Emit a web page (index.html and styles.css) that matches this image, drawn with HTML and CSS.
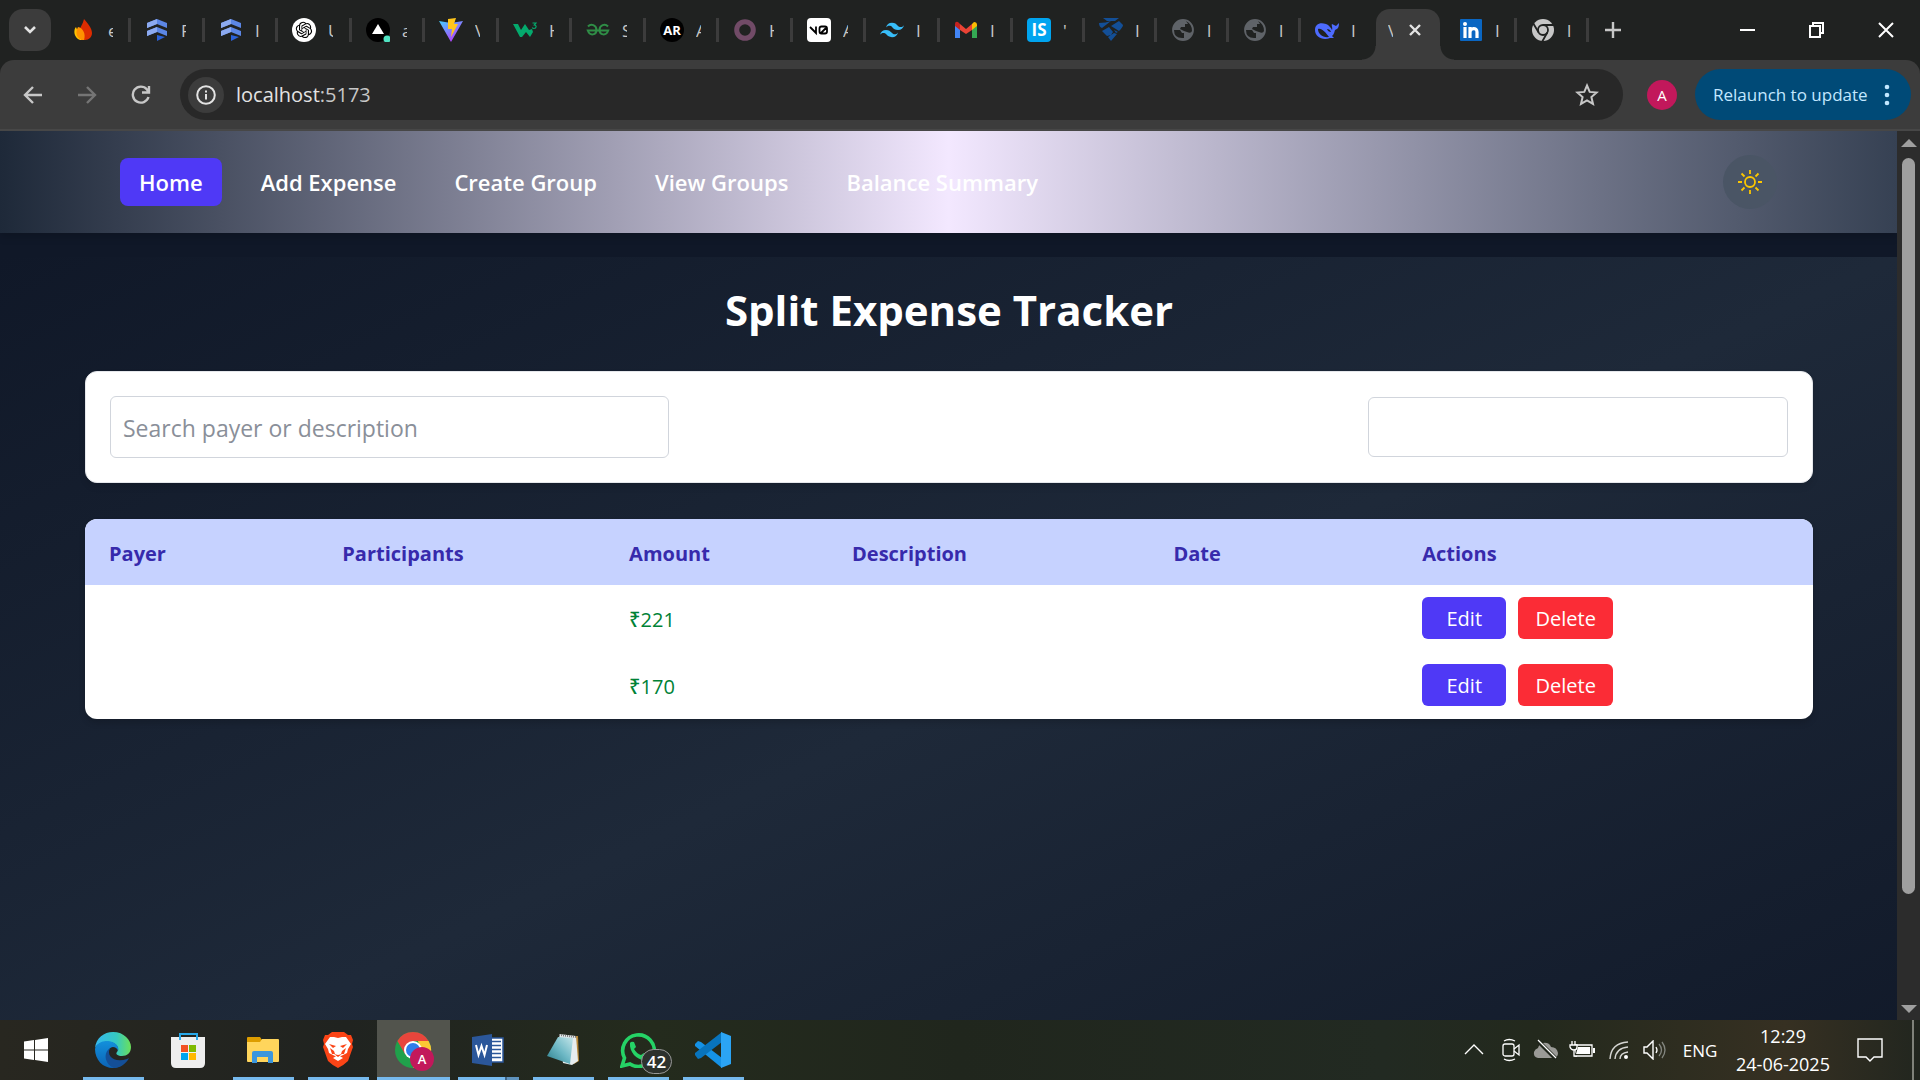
FILE: index.html
```html
<!DOCTYPE html>
<html lang="en">
<head>
<meta charset="utf-8">
<title>Split Expense Tracker</title>
<link rel="stylesheet" href="styles.css">
</head>
<body>
<header class="browser">
  <div class="tabstrip">
    <button class="tab-search" aria-label="Search tabs"><svg width="14" height="8" viewBox="0 0 14 8"><path d="M2 1l5 5 5-5" fill="none" stroke="#e3e3e3" stroke-width="2.6"/></svg></button>
    <div class="tabs">
      <button class="tab"><svg class="fav" viewBox="0 0 24 24"><path d="M4 9C1 12 2 20 8 22h6C7 19 6 14 4 9z" fill="#ffc400"/><path d="M12 1c4 5 8 9 8 14 0 4-3 7-7 7-5 0-8-3-6-9 1-4 4-7 5-12z" fill="#dd2c00"/><path d="M6 9c5 1 8 7 6 13-6 0-10-6-6-13z" fill="#ff9100"/></svg><span class="name">e</span></button>
      <button class="tab"><svg class="fav" viewBox="0 0 24 24"><path d="M2 5l10-4 10 4v5L12 6 2 10zM2 13l10-4 10 4v5l-10-4-10 4z" fill="#5c87e6"/><path d="M2 5l10-4v5L2 10zM2 13l10-4v5L2 18z" fill="#8caaf0"/><path d="M12 17l8 2-8 4z" fill="#2b62d9"/></svg><span class="name">F</span></button>
      <button class="tab"><svg class="fav" viewBox="0 0 24 24"><path d="M2 5l10-4 10 4v5L12 6 2 10zM2 13l10-4 10 4v5l-10-4-10 4z" fill="#5c87e6"/><path d="M2 5l10-4v5L2 10zM2 13l10-4v5L2 18z" fill="#8caaf0"/><path d="M12 17l8 2-8 4z" fill="#2b62d9"/></svg><span class="name">I</span></button>
      <button class="tab"><svg class="fav" viewBox="0 0 24 24"><circle cx="12" cy="12" r="12" fill="#fff"/><path transform="translate(3.800 3.800) scale(.68)" fill="#000" d="M22.2819 9.8211a5.9847 5.9847 0 0 0-.5157-4.9108 6.0462 6.0462 0 0 0-6.5098-2.9A6.0651 6.0651 0 0 0 4.9807 4.1818a5.9847 5.9847 0 0 0-3.9977 2.9 6.0462 6.0462 0 0 0 .7427 7.0966 5.98 5.98 0 0 0 .511 4.9107 6.051 6.051 0 0 0 6.5146 2.9001A5.9847 5.9847 0 0 0 13.2599 24a6.0557 6.0557 0 0 0 5.7718-4.2058 5.9894 5.9894 0 0 0 3.9977-2.9001 6.0557 6.0557 0 0 0-.7475-7.0729zm-9.022 12.6081a4.4755 4.4755 0 0 1-2.8764-1.0408l.1419-.0804 4.7783-2.7582a.7948.7948 0 0 0 .3927-.6813v-6.7369l2.02 1.1686a.071.071 0 0 1 .038.052v5.5826a4.504 4.504 0 0 1-4.4945 4.4944zm-9.6607-4.1254a4.4708 4.4708 0 0 1-.5346-3.0137l.142.0852 4.783 2.7582a.7712.7712 0 0 0 .7806 0l5.8428-3.3685v2.3324a.0804.0804 0 0 1-.0332.0615L9.74 19.9502a4.4992 4.4992 0 0 1-6.1408-1.6464zM2.3408 7.8956a4.485 4.485 0 0 1 2.3655-1.9728V11.6a.7664.7664 0 0 0 .3879.6765l5.8144 3.3543-2.0201 1.1685a.0757.0757 0 0 1-.071 0l-4.8303-2.7865A4.504 4.504 0 0 1 2.3408 7.872zm16.5963 3.8558L13.1038 8.364 15.1192 7.2a.0757.0757 0 0 1 .071 0l4.8303 2.7913a4.4944 4.4944 0 0 1-.6765 8.1042v-5.6772a.79.79 0 0 0-.407-.667zm2.0107-3.0231l-.142-.0852-4.7735-2.7818a.7759.7759 0 0 0-.7854 0L9.409 9.2297V6.8974a.0662.0662 0 0 1 .0284-.0615l4.8303-2.7866a4.4992 4.4992 0 0 1 6.6802 4.66zM8.3065 12.863l-2.02-1.1638a.0804.0804 0 0 1-.038-.0567V6.0742a4.4992 4.4992 0 0 1 7.3757-3.4537l-.142.0805L8.704 5.459a.7948.7948 0 0 0-.3927.6813zm1.0976-2.3654l2.602-1.4998 2.6069 1.4998v2.9994l-2.5974 1.4997-2.6067-1.4997Z"/></svg><span class="name">U</span></button>
      <button class="tab"><svg class="fav" viewBox="0 0 24 24"><circle cx="12" cy="12" r="12" fill="#000"/><path d="M12 6l6 10H6z" fill="#fff"/><circle cx="21" cy="21" r="3.500" fill="#50e3c2"/></svg><span class="name">a</span></button>
      <button class="tab"><svg class="fav" viewBox="0 0 24 24"><defs><linearGradient id="vite" x1="0" y1="0" x2=".7" y2="1"><stop offset="0" stop-color="#41d1ff"/><stop offset="1" stop-color="#bd34fe"/></linearGradient></defs><path d="M0 3l12 21L24 3l-12 2z" fill="url(#vite)"/><path d="M9 1l8-1-2 6h4l-7 13 1-8H9z" fill="#ffc61c"/></svg><span class="name">V</span></button>
      <button class="tab"><svg class="fav" viewBox="0 0 24 24"><path d="M0 6h5l3 6 4-6 4 6 3-1 1 3-3 5-4-5-4 5H7z" fill="#04aa6d"/><path d="M19.500 5h3.500l-1.700 2c2.600.1 2.300 3.500-.3 3.500-1 0-1.500-.4-1.700-1" fill="none" stroke="#04aa6d" stroke-width="1.200"/></svg><span class="name">H</span></button>
      <button class="tab"><svg class="fav" viewBox="0 0 24 24"><g fill="none" stroke="#2f8d46" stroke-width="2"><path d="M2 8.500C5 5 10.500 7 10.500 12S4 18.500 1.800 12.500H22.200C20 18.500 13.500 17 13.500 12S19 5 22 8.500"/></g></svg><span class="name">S</span></button>
      <button class="tab"><span class="fav fav-ar">AR</span><span class="name">A</span></button>
      <button class="tab"><svg class="fav" viewBox="0 0 24 24"><circle cx="12" cy="12" r="8.300" fill="none" stroke="#714b67" stroke-width="5"/></svg><span class="name">H</span></button>
      <button class="tab"><svg class="fav" viewBox="0 0 24 24"><rect width="24" height="24" rx="4" fill="#fff"/><path d="M3 9l6 6V8.500M12.500 13.500v-3q0-2 2-2h3.500q2 0 2 2v3q0 2-2 2h-3.500q-2 0-2-2zM14 15l6-6" fill="none" stroke="#000" stroke-width="1.800"/></svg><span class="name">A</span></button>
      <button class="tab"><svg class="fav" viewBox="0 0 24 24"><path d="M12 4.800c-3.200 0-5.200 1.600-6 4.800 1.200-1.600 2.600-2.200 4.200-1.800.9.230 1.570.890 2.290 1.620C13.670 10.620 15.030 12 18 12c3.200 0 5.200-1.600 6-4.800-1.200 1.600-2.600 2.200-4.200 1.800-.91-.23-1.570-.89-2.290-1.620C16.340 6.180 14.980 4.800 12 4.800M6 12c-3.200 0-5.200 1.600-6 4.800 1.200-1.600 2.600-2.200 4.200-1.800.91.230 1.570.890 2.290 1.620C7.670 17.820 9.030 19.200 12 19.200c3.200 0 5.200-1.600 6-4.800-1.200 1.600-2.600 2.200-4.200 1.800-.91-.23-1.570-.89-2.290-1.620C10.340 13.380 8.980 12 6 12" fill="#38bdf8"/></svg><span class="name">I</span></button>
      <button class="tab"><svg class="fav" viewBox="0 0 24 24"><path d="M1 7l5 4v9H1z" fill="#4285f4"/><path d="M18 11l5-4v13h-5z" fill="#34a853"/><path d="M18 6l2-2q3 0 3 3v1l-5 4z" fill="#fbbc04"/><path d="M1 8V6q0-3 3-2l2 2v6z" fill="#c5221f"/><path d="M6 6l6 5 6-5v6l-6 4-6-4z" fill="#ea4335"/></svg><span class="name">I</span></button>
      <button class="tab"><span class="fav fav-is">IS</span><span class="name">'</span></button>
      <button class="tab"><svg class="fav" viewBox="0 0 24 24"><path d="M4 0h16l-4 3H8zM0 5q7 0 12-2L3 10q-3-1-3-5zM12 8l8-5 4 4q0 2-4 6zM3 13l7-4 4 5-2 3-4 1zM9 19l6-4 3 1-6 7zM15 12l4 2-2 1z" fill="#134f97"/></svg><span class="name">I</span></button>
      <button class="tab"><svg class="fav" viewBox="0 0 24 24"><circle cx="12" cy="12" r="9.700" fill="#5f6368" stroke="#5f6368" stroke-width="2.400"/><path d="M3 12h6l2 3h2v5q-10 1-10-8zM15 3q6 3 6 10-1 3-5 1l-3-1-4-2 1-2h4V6h3z" fill="#202221"/></svg><span class="name">l</span></button>
      <button class="tab"><svg class="fav" viewBox="0 0 24 24"><circle cx="12" cy="12" r="9.700" fill="#5f6368" stroke="#5f6368" stroke-width="2.400"/><path d="M3 12h6l2 3h2v5q-10 1-10-8zM15 3q6 3 6 10-1 3-5 1l-3-1-4-2 1-2h4V6h3z" fill="#202221"/></svg><span class="name">l</span></button>
      <button class="tab tab-last"><svg class="fav" viewBox="0 0 24 24"><path d="M0 12c0-6 5-8 11-6 3 1 5 4 6 6 1-2-1-5 0-6l4 2 3-3c0 4-1 6-4 7-1 4-2 5-3 6l2 2h-4c-7 3-15-1-15-8z" fill="#4d6bfe"/><path d="M3 11c4-1 7 3 11 8-6 1-11-3-11-8zM12 11q3 0 4 3-3 0-4-3z" fill="#202221"/></svg><span class="name">I</span></button>
      <button class="tab-active"><span class="name">V</span><svg width="14" height="14" viewBox="0 0 14 14"><path d="M2 2l10 10M12 2L2 12" stroke="#e3e3e3" stroke-width="2.400"/></svg></button>
      <button class="tab"><svg class="fav" viewBox="0 0 24 24"><rect x="1" y="1" width="22" height="22" rx="1" fill="#0a66c2"/><g stroke="#fff" stroke-width="3.200" fill="none"><path d="M6 9v11M11 9v11M11 14c0-4 7-5 7 0v6"/></g><circle cx="6" cy="6" r="2" fill="#fff"/></svg><span class="name">I</span></button>
      <button class="tab"><svg class="fav" viewBox="0 0 24 24"><circle cx="12" cy="12" r="11" fill="#c7c7c7"/><g fill="none" stroke="#202221" stroke-width="1.800"><circle cx="12" cy="12" r="5"/><path d="M12 7h11M7.700 14.500L2 5M16.300 14.500L11 24"/></g></svg><span class="name">l</span></button>
      <button class="icon-btn new-tab" aria-label="New tab"><svg width="16" height="16" viewBox="0 0 16 16"><path d="M8 0v16M0 8h16" stroke="#c7c7c7" stroke-width="2.400"/></svg></button>
    </div>
    <div class="window-controls">
      <button class="icon-btn" aria-label="Minimize"><svg width="16" height="16" viewBox="0 0 16 16"><path d="M0 8h15" stroke="#fff" stroke-width="2"/></svg></button>
      <button class="icon-btn" aria-label="Restore"><svg width="16" height="16" viewBox="0 0 16 16"><path d="M1 4h10v11H1zM4 4V1h10v10h-3" fill="none" stroke="#fff" stroke-width="2"/></svg></button>
      <button class="icon-btn" aria-label="Close"><svg width="16" height="16" viewBox="0 0 16 16"><path d="M1 1l14 14M15 1L1 15" stroke="#fff" stroke-width="2"/></svg></button>
    </div>
  </div>
  <div class="toolbar">
    <div class="history">
      <button class="icon-btn" aria-label="Back"><svg width="20" height="20" viewBox="0 0 20 20"><path d="M19 10H2M10 2l-8 8 8 8" fill="none" stroke="#c7c7c7" stroke-width="2.400"/></svg></button>
      <button class="icon-btn" aria-label="Forward"><svg width="20" height="20" viewBox="0 0 20 20"><path d="M1 10h17M10 2l8 8-8 8" fill="none" stroke="#757575" stroke-width="2.400"/></svg></button>
      <button class="icon-btn" aria-label="Reload"><svg width="20" height="20" viewBox="0 0 20 20"><path d="M17.500 12A8 8 0 1 1 16 4.500l1 1.500M18 1v6.500h-7" fill="none" stroke="#c7c7c7" stroke-width="2.400"/></svg></button>
    </div>
    <div class="omnibox">
      <button class="site-info" aria-label="Site information"><svg width="20" height="20" viewBox="0 0 20 20"><circle cx="10" cy="10" r="8.800" fill="none" stroke="#e3e3e3" stroke-width="2"/><path d="M10 9v5.500M10 5.500v2" stroke="#e3e3e3" stroke-width="2"/></svg></button>
      <div class="url">localhost<span class="port">:5173</span></div>
      <button class="icon-btn" aria-label="Bookmark this tab"><svg width="24" height="24" viewBox="0 0 24 24"><path d="M12 2.500l2.700 6.400 7 .6-5.300 4.600 1.600 6.800-6-3.600-6 3.600 1.600-6.800L2.300 9.500l7-.6z" fill="none" stroke="#c7c7c7" stroke-width="2"/></svg></button>
    </div>
    <button class="avatar">A</button>
    <button class="relaunch">Relaunch to update<svg width="6" height="24" viewBox="0 0 6 24"><g fill="#c2e7ff"><circle cx="3" cy="4" r="2.300"/><circle cx="3" cy="12" r="2.300"/><circle cx="3" cy="20" r="2.300"/></g></svg></button>
  </div>
</header>

<div class="viewport">
  <div class="page">
    <nav class="navbar">
      <div class="nav-links">
        <a class="nav-link nav-link-current" href="#home">Home</a>
        <a class="nav-link" href="#add">Add Expense</a>
        <a class="nav-link" href="#create">Create Group</a>
        <a class="nav-link" href="#groups">View Groups</a>
        <a class="nav-link" href="#balance">Balance Summary</a>
      </div>
      <button class="theme-toggle" aria-label="Toggle theme"><svg width="24" height="24" viewBox="0 0 24 24"><g fill="none" stroke="#fdc700" stroke-width="1.800"><circle cx="12" cy="12" r="5"/><path d="M12 0v4M12 20v4M0 12h4M20 12h4M3.500 3.500l3 3M17.500 17.500l3 3M3.500 20.500l3-3M17.500 6.500l3-3"/></g></svg></button>
    </nav>
    <main class="content">
      <h1 class="title">Split Expense Tracker</h1>
      <section class="filters">
        <input class="search" type="text" placeholder="Search payer or description" aria-label="Search payer or description">
        <select class="picker" aria-label="Filter"><option></option></select>
      </section>
      <table class="expenses">
        <colgroup><col class="c-payer"><col class="c-people"><col class="c-amount"><col class="c-text"><col class="c-date"><col class="c-actions"></colgroup>
        <thead>
          <tr><th>Payer</th><th>Participants</th><th>Amount</th><th>Description</th><th>Date</th><th>Actions</th></tr>
        </thead>
        <tbody>
          <tr><td></td><td></td><td class="amount">₹221</td><td></td><td></td><td><div class="actions"><button class="btn btn-edit">Edit</button><button class="btn btn-delete">Delete</button></div></td></tr>
          <tr><td></td><td></td><td class="amount">₹170</td><td></td><td></td><td><div class="actions"><button class="btn btn-edit">Edit</button><button class="btn btn-delete">Delete</button></div></td></tr>
        </tbody>
      </table>
    </main>
  </div>
  <div class="scrollbar">
    <svg width="16" height="8" viewBox="0 0 16 8"><path d="M0 8l8-8 8 8z" fill="#9f9f9f"/></svg>
    <div class="track"><div class="thumb"></div></div>
    <svg width="16" height="8" viewBox="0 0 16 8"><path d="M0 0l8 8 8-8z" fill="#9f9f9f"/></svg>
  </div>
</div>

<footer class="taskbar">
  <button class="start" aria-label="Start"><svg width="24" height="24" viewBox="0 0 24 24"><path d="M0 3.500L10 2v9.500H0zM11 1.900L24 0v11.500H11zM0 12.500h10V22L0 20.500zM11 12.500h13V24l-13-1.900z" fill="#fff"/></svg></button>
  <div class="apps">
    <button class="app running" aria-label="Edge"><svg width="36" height="36" viewBox="0 0 36 36"><defs><linearGradient id="e1"><stop offset="0" stop-color="#35b8f0"/><stop offset=".6" stop-color="#36c9c0"/><stop offset="1" stop-color="#6be05a"/></linearGradient><linearGradient id="e2" x1="0" y1="0" x2="0" y2="1"><stop offset="0" stop-color="#1290dc"/><stop offset="1" stop-color="#0c63b4"/></linearGradient></defs><path d="M0 16C1 6 9 0 18 0c11 0 18 8 18 15 0 6-4 9-9 9-4 0-7-2-5-4 3-3 0-9-7-10C8 9 2 12 0 16z" fill="url(#e1)"/><path d="M0 17c1-5 6-8 12-8 8 0 13 6 11 10-1-4-7-6-9-1-3 8 4 17 13 15-3 2-6 3-9 3C8 36 0 28 0 17z" fill="url(#e2)"/><path d="M15 16c-4 8 4 15 17 11l2-1c-3 6-9 10-15 10-8-3-12-14-4-20z" fill="#144f97"/></svg></button>
    <button class="app" aria-label="Store"><svg width="36" height="36" viewBox="0 0 36 36"><path d="M1 5h34v26q0 5-5 5H6q-5 0-5-5z" fill="#eee"/><path d="M10 8V2h17v6" fill="none" stroke="#29a9ea" stroke-width="2"/><path fill="#f25022" d="M11 13h7v7h-7z"/><path fill="#7fba00" d="M19 13h7v7h-7z"/><path fill="#00a4ef" d="M11 21h7v7h-7z"/><path fill="#ffb900" d="M19 21h7v7h-7z"/></svg></button>
    <button class="app running" aria-label="File Explorer"><svg width="36" height="36" viewBox="0 0 36 36"><path d="M2 6q0-1 1-1h12l2 3v6H2z" fill="#dd9d00"/><path d="M2 10h13l2-3h16q1 0 1 1v21q0 1-1 1H3q-1 0-1-1z" fill="#ffd55c"/><path d="M7 31V21q0-2 2-2h17q2 0 2 2v10h-5v-6H12v6z" fill="#3b96dd"/></svg></button>
    <button class="app running" aria-label="Brave"><svg width="36" height="36" viewBox="0 0 36 36"><path d="M12 0h12l4 3h3l2 5-1 4 1 3-5 14q-4 4-10 7-6-3-10-7L3 15l1-3-1-4 2-5h3z" fill="#fb4416"/><path d="M10 5h4l4 1 4-1h4l5 7-3 5-1 4-6 3-3 1-3-1-6-3-1-4-3-5z" fill="#fff"/><path d="M13 26l5-3 5 3-5 3z" fill="#fff"/><path d="M9 12l7 2-3 2zM27 12l-7 2 3 2zM10 16l4 3 1 3-3 0zM26 16l-4 3-1 3 3 0zM14 22l4 1 4-1-4 3z" fill="#fb4416"/></svg></button>
    <button class="app running app-focused" aria-label="Chrome"><svg width="40" height="40" viewBox="0 0 40 40"><circle cx="20" cy="20" r="18" fill="#20a14b"/><path d="M4.400 11A18 18 0 0 1 35.600 11H20L12 24z" fill="#e8453c"/><path d="M35.600 11A18 18 0 0 1 20 38l8-13-3-14z" fill="#fcc934"/><circle cx="20" cy="20" r="9" fill="#fff"/><circle cx="20" cy="20" r="7" fill="#2f7de9"/></svg><span class="profile">A</span></button>
    <button class="app running app-stacked" aria-label="Word"><svg width="36" height="36" viewBox="0 0 36 36"><path d="M16 6h17v24H16z" fill="#fff" stroke="#2b579a" stroke-width="1.500"/><path d="M22 9.500h9M22 13.500h9M22 17.500h9M22 21.500h9M22 25.500h9" stroke="#2b579a" stroke-width="1.500"/><path d="M2 5l20-3v32L2 31z" fill="#2b579a"/><path d="M6 13l2.500 10 3-9 3 9L17 13" fill="none" stroke="#fff" stroke-width="2"/></svg></button>
    <button class="app running" aria-label="Notepad"><svg width="36" height="36" viewBox="0 0 36 36"><path d="M30 4h3l1 25-5 3z" fill="#b78838"/><path d="M14 2l17 2 2 25-6 4-9-2z" fill="#e7edef"/><defs><linearGradient id="np" x1="0" y1="1" x2="1" y2="0"><stop offset="0" stop-color="#287c8a"/><stop offset=".5" stop-color="#6db8c5"/><stop offset="1" stop-color="#c5e6ea"/></linearGradient></defs><path d="M13 5l15 1-3 26-23-8z" fill="url(#np)"/><path d="M14 3l17 2" stroke="#777" stroke-width="2" stroke-dasharray="1 1"/></svg></button>
    <button class="app running" aria-label="WhatsApp"><svg width="36" height="36" viewBox="0 0 36 36"><path d="M2 34l2.500-8A15.800 15.800 0 1 1 10 32z" fill="none" stroke="#25d366" stroke-width="3.600"/><path d="M10 11q1-2 4-1l2 5-2 2q3 5 7 6l3-2 5 3q-1 4-5 4C17 28 9 20 10 11z" fill="#25d366"/></svg><span class="badge">42</span></button>
    <button class="app running" aria-label="Visual Studio Code"><svg width="36" height="36" viewBox="0 0 36 36"><path d="M0 12l3-3 3 1 21 16v10L0 14z" fill="#1592e6"/><path d="M0 23l3 4 3-1L27 10V0L0 21z" fill="#0874bd"/><path d="M26 0l10 4v28l-10 4z" fill="#2ba4f4"/></svg></button>
  </div>
  <div class="tray">
    <svg width="20" height="20" viewBox="0 0 20 20"><path d="M1 14l9-9 9 9" fill="none" stroke="#fff" stroke-width="1.400"/></svg>
    <svg class="t-meet" width="18" height="24" viewBox="0 0 18 24"><g fill="none" stroke="#fff" stroke-width="1.300"><rect x="1" y="6" width="11" height="12" rx="2"/><path d="M12 11l5-4v10l-5-4M2 3q5-3 11 0M2 21q5 3 11 0"/></g></svg>
    <svg class="t-cloud" width="26" height="24" viewBox="0 0 26 24"><path d="M5 20q-5-1-4-6 1-3 4-4 1-4 5-5 6-1 8 4 6 0 7 6 0 5-5 5z" fill="#9a9a96"/><path d="M5 3l18 18" stroke="#20261c" stroke-width="4"/><path d="M5 2l18 18" stroke="#fff" stroke-width="1.300"/></svg>
    <svg class="t-battery" width="26" height="20" viewBox="0 0 26 20"><path d="M6 5h17v11H6z" fill="none" stroke="#fff" stroke-width="1.300"/><path d="M9 7h12v7H7zM24 8h2v5h-2z" fill="#fff"/><path d="M1 5h7v2q0 3-3 3t-4-3zM3 5V1M6 5V1M5 10v6h3" fill="#20261c" stroke="#fff" stroke-width="1.300"/></svg>
    <svg class="t-wifi" width="20" height="20" viewBox="0 0 20 20"><g fill="none" stroke="#d5d5d2" stroke-width="1.400"><path d="M1 19Q2 3 19 2M6 19Q7 8 19 7M11 19Q11 13 19 12"/></g><circle cx="17" cy="17" r="2" fill="#fff"/></svg>
    <svg class="t-volume" width="24" height="20" viewBox="0 0 24 20"><path d="M1 7h3l6-6v18l-6-6H1z" fill="none" stroke="#fff" stroke-width="1.400"/><path d="M13 7q2 3 0 6" fill="none" stroke="#fff" stroke-width="1.300"/><path d="M16 4q5 6 0 12M19 2q6 8 0 16" fill="none" stroke="#83867f" stroke-width="1.300"/></svg>
    <span class="lang">ENG</span>
    <div class="clock"><span>12:29</span><span>24-06-2025</span></div>
    <svg class="t-notes" width="26" height="26" viewBox="0 0 26 26"><path d="M1 2h24v18h-8l-4 4-4-4H1z" fill="none" stroke="#fff" stroke-width="1.400"/></svg>
    <div class="peek"></div>
  </div>
</footer>
</body>
</html>
```
FILE: styles.css
```css
* { box-sizing: border-box; }
body {
  margin: 0;
  height: 100vh;
  display: flex;
  flex-direction: column;
  overflow: hidden;
  font-family: "Open Sans", "Noto Sans", sans-serif;
  background: #101828;
}
button { border: 0; padding: 0; margin: 0; background: none; font: inherit; color: inherit; }
svg { display: block; flex: none; }

/* Browser frame */
.browser { background: #202221; flex: none; }
.tabstrip { height: 60px; display: flex; align-items: center; padding-left: 9px; }
.tab-search { width: 42px; height: 42px; border-radius: 14px; background: #3c3c3c; display: grid; place-items: center; flex: none; }
.tabs { display: flex; align-items: center; align-self: stretch; padding-left: 7px; flex: 1; min-width: 0; }
.tab { flex: none; width: 73px; height: 24px; padding-left: 14px; display: flex; align-items: center; gap: 12px; border-right: 3px solid #3c3c3c; }
.tab:nth-child(even) { width: 74px; }
.tab:nth-child(n+14) { width: 72px; }
.tab-last { border-right-color: transparent; }
.fav { width: 24px; height: 24px; }
.fav-ar, .fav-is { display: grid; place-items: center; color: #fff; font-weight: 700; line-height: 24px; flex: none; }
.fav-ar { border-radius: 50%; background: #000; font-size: 13px; }
.fav-is { border-radius: 4px; background: #00a4ef; font-size: 17px; }
.name { width: 5px; overflow: hidden; padding-top: 2px; font-size: 17px; line-height: 24px; color: #c7c7c7; text-align: left; flex: none; }
.tab-active { flex: none; align-self: flex-end; width: 64px; height: 51px; margin: 0 5px 0 3px; padding: 0 18px 9px 12px; border-radius: 14px 14px 0 0; background: #3c3c3c; display: flex; align-items: center; justify-content: space-between; position: relative; }
.tab-active::before, .tab-active::after { content: ""; position: absolute; bottom: 0; width: 14px; height: 14px; }
.tab-active::before { right: 100%; background: radial-gradient(circle at 0 0, transparent 13px, #3c3c3c 14px); }
.tab-active::after { left: 100%; background: radial-gradient(circle at 100% 0, transparent 13px, #3c3c3c 14px); }
.icon-btn { display: grid; place-items: center; flex: none; }
.new-tab { margin-left: 16px; }
.window-controls { display: flex; }
.window-controls .icon-btn { width: 69px; height: 58px; }

.toolbar { height: 71px; padding: 0 9px 0 6px; display: flex; align-items: center; background: #3c3c3c; border-radius: 14px 14px 0 0; border-bottom: 2px solid #474747; }
.history { display: flex; width: 174px; flex: none; }
.history .icon-btn { width: 54px; height: 48px; }
.omnibox { flex: 1; height: 51px; border-radius: 26px; background: #282828; display: flex; align-items: center; padding: 0 24px 0 8px; }
.site-info { width: 36px; height: 36px; border-radius: 50%; background: #3c3c3c; display: grid; place-items: center; }
.url { flex: 1; padding-left: 12px; font-size: 20px; color: #e3e3e3; }
.port { color: #c7c7c7; }
.avatar { width: 30px; height: 30px; margin: 0 18px 0 24px; border-radius: 50%; background: #c2185b; color: #fff; font-size: 15px; line-height: 30px; }
.relaunch { height: 51px; width: 216px; padding: 0 21px 0 18px; border-radius: 26px; background: #004a77; color: #c2e7ff; font-size: 17px; display: flex; align-items: center; justify-content: space-between; white-space: nowrap; }

/* Web page */
.viewport { flex: 1; min-height: 0; display: flex; }
.page { flex: 1; min-width: 0; overflow: hidden; background: #101828; }
.navbar { height: 102px; padding: 0 120px; display: flex; align-items: center; justify-content: space-between; background: linear-gradient(90deg in oklab, #1e2939, #f3e8ff 50%, #364153); box-shadow: 0 4px 8px rgba(0, 0, 0, .15); }
.nav-links { display: flex; gap: 20px; }
.nav-link { height: 48px; padding: 0 19px; border-radius: 8px; color: #fff; font-size: 22px; font-weight: 600; line-height: 49px; text-decoration: none; white-space: nowrap; }
.nav-link-current { background: #4f39f6; }
.theme-toggle { width: 54px; height: 54px; border-radius: 50%; background: #4a5565; display: grid; place-items: center; }
.content { min-height: 100%; margin-top: 24px; padding: 28px 84px 30px 85px; background: linear-gradient(to bottom right in oklab, #101828, #1e2939, #101828); }
.title { margin: 0 0 36px; font-size: 42px; line-height: 50px; font-weight: 700; color: #fff; text-align: center; }
.filters { display: flex; align-items: center; justify-content: space-between; padding: 24px; border: 1px solid #e5e7eb; border-radius: 12px; background: #fff; box-shadow: 0 4px 6px rgba(0, 0, 0, .1); }
.search, .picker { border: 1px solid #d1d5dc; border-radius: 6px; background: #fff; font: inherit; font-size: 23px; color: #1e2939; padding: 2px 12px 0; }
.search { width: 559px; height: 62px; }
.search::placeholder { color: #8a8f99; opacity: 1; }
.picker { width: 420px; height: 60px; appearance: none; }
.expenses { width: 100%; margin-top: 36px; table-layout: fixed; border-spacing: 0; border-radius: 12px; overflow: hidden; background: #fff; font-size: 20px; box-shadow: 0 4px 6px rgba(0, 0, 0, .15); }
.c-payer { width: 13.5%; }
.c-people { width: 16.6%; }
.c-amount { width: 12.9%; }
.c-text { width: 18.6%; }
.c-date { width: 14.4%; }
.c-actions { width: 24%; }
.expenses th { height: 66px; padding: 2px 24px 0; text-align: left; font-weight: 700; color: #372aac; background: #c6d2ff; }
.expenses td { height: 67px; padding: 0 24px 1px; }
.expenses .amount { padding-top: 2px; color: #008236; font-weight: 500; }
.actions { display: flex; gap: 12px; }
.btn { height: 42px; border-radius: 6px; color: #fff; font-size: 20px; line-height: 44px; }
.btn-edit { width: 84px; background: #4f39f6; }
.btn-delete { width: 95px; background: #fb2c36; }

.scrollbar { width: 23px; flex: none; padding: 8px 0 7px; background: #2c2c2c; display: flex; flex-direction: column; align-items: center; gap: 11px; }
.track { flex: 1; width: 13px; }
.thumb { height: 88%; border-radius: 7px; background: #9f9f9f; }

/* Desktop taskbar */
.taskbar { height: 60px; flex: none; display: flex; justify-content: space-between; color: #fff; background: linear-gradient(90deg, #282720, #202320 18%, #242b1d 34%, #20261d 50%, #222a22 72%, #23291d 80%, #363022 93%, #22261f); }
.start { width: 76px; padding-right: 4px; display: grid; place-items: center; }
.apps { display: flex; flex: 1; }
.app { width: 75px; padding-right: 2px; display: grid; place-items: center; position: relative; }
.running::after { content: ""; position: absolute; left: 7px; right: 7px; bottom: 0; height: 3px; background: #76b9ed; }
.app-focused { background: linear-gradient(#52544d, #52544d) center / 73px 100% no-repeat; }
.app-focused::after { left: 1px; right: 1px; }
.app-stacked::after { background: linear-gradient(90deg, #76b9ed 47px, #3e6485 47px, #3e6485 49px, #5f93bd 49px); }
.profile { position: absolute; left: 34px; top: 27px; width: 24px; height: 24px; border-radius: 50%; background: #c2185b; font-size: 13px; font-weight: 600; line-height: 24px; }
.badge { position: absolute; left: 40px; top: 29px; width: 31px; height: 25px; border: 1px solid #999; border-radius: 13px; background: #2d312d; font-size: 17px; font-weight: 600; line-height: 23px; }
.tray { display: flex; align-items: center; }
.t-meet { margin-left: 18px; }
.t-cloud { margin-left: 13px; }
.t-battery { margin-left: 10px; }
.t-wifi { margin-left: 14px; }
.t-volume { margin-left: 14px; }
.lang { width: 50px; text-align: center; font-size: 17px; margin-left: 8px; }
.clock { width: 112px; margin-left: 2px; display: flex; flex-direction: column; text-align: center; font-size: 18px; line-height: 28px; }
.t-notes { margin-left: 18px; }
.peek { align-self: stretch; width: 8px; margin-left: 29px; border-left: 2px solid #80827a; }
```
